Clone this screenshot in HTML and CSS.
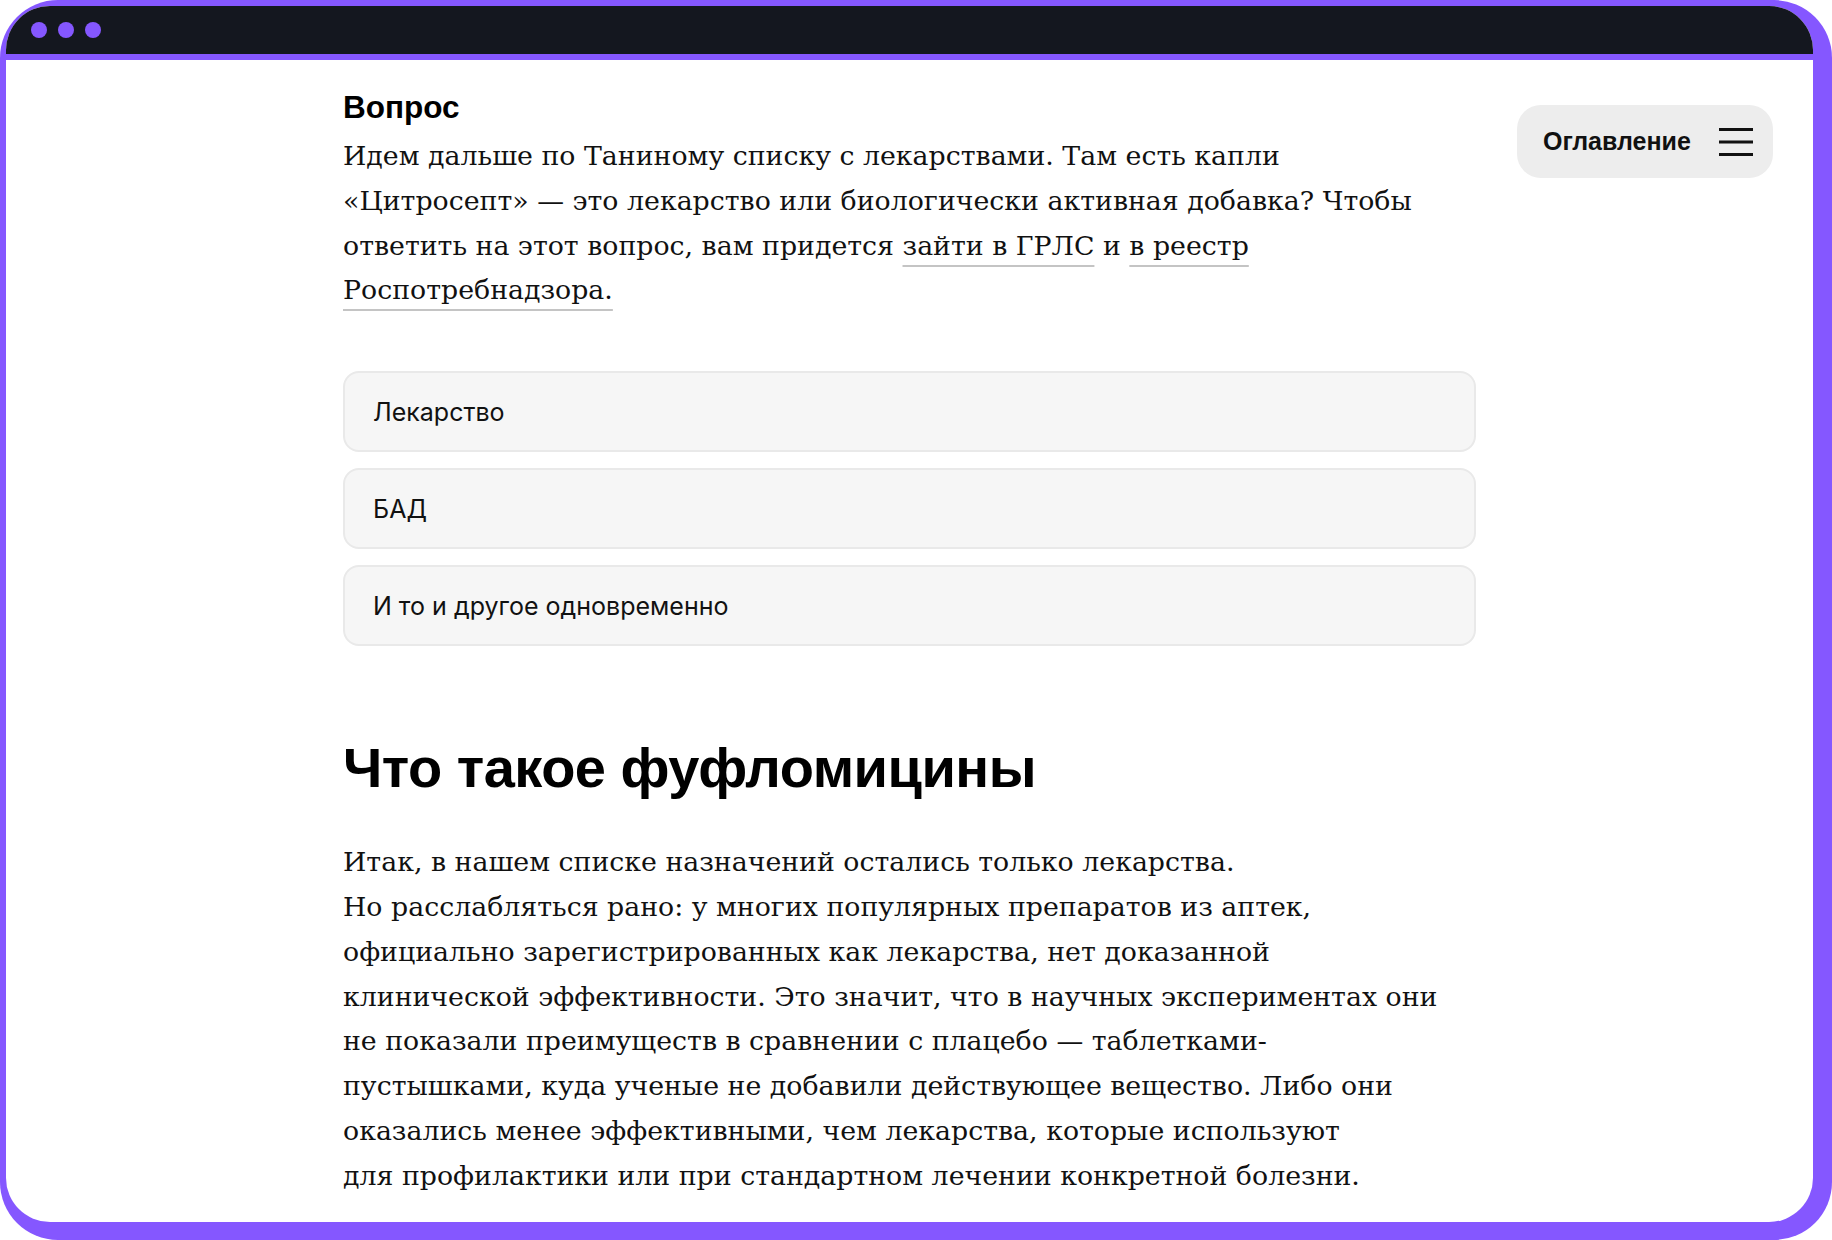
FILE: index.html
```html
<!DOCTYPE html>
<html lang="ru">
<head>
<meta charset="utf-8">
<title>Что такое фуфломицины</title>
<link rel="stylesheet" href="styles.css">
</head>
<body>
<div class="frame">
  <div class="window">
    <div class="titlebar">
      <span class="dot"></span><span class="dot"></span><span class="dot"></span>
    </div>
    <div class="content">
      <article class="article">
        <section class="quiz">
          <h3 class="quiz-title">Вопрос</h3>
          <p class="text">Идем дальше по Таниному списку с лекарствами. Там есть капли<br>«Цитросепт» — это лекарство или биологически активная добавка? Чтобы<br>ответить на этот вопрос, вам придется <a href="#" class="link">зайти в ГРЛС</a> и <a href="#" class="link">в реестр<br>Роспотребнадзора.</a></p>
          <div class="options">
            <button class="option">Лекарство</button>
            <button class="option">БАД</button>
            <button class="option">И то и другое одновременно</button>
          </div>
        </section>
        <h2 class="heading">Что такое фуфломицины</h2>
        <p class="text">Итак, в нашем списке назначений остались только лекарства.<br>Но расслабляться рано: у многих популярных препаратов из аптек,<br>официально зарегистрированных как лекарства, нет доказанной<br>клинической эффективности. Это значит, что в научных экспериментах они<br>не показали преимуществ в сравнении с плацебо — таблетками-<br>пустышками, куда ученые не добавили действующее вещество. Либо они<br>оказались менее эффективными, чем лекарства, которые используют<br>для профилактики или при стандартном лечении конкретной болезни.</p>
      </article>
      <aside class="aside">
        <button class="toc">
          <span class="toc-label">Оглавление</span>
          <svg class="toc-icon" width="36" height="30" viewBox="0 0 36 30" aria-hidden="true">
            <path d="M1 2.5h34M1 15h34M1 27.5h34" stroke="#111" stroke-width="3" fill="none"/>
          </svg>
        </button>
      </aside>
    </div>
  </div>
</div>
</body>
</html>
```

FILE: styles.css
```css
* { box-sizing: border-box; }

html, body {
  margin: 0;
  padding: 0;
  background: #ffffff;
}

.frame {
  width: 1832px;
  height: 1240px;
  background: #8557ff;
  border-radius: 58px;
  padding: 6px 19px 18px 6px;
}

.window {
  height: 100%;
  background: #ffffff;
  border-radius: 44px;
  overflow: hidden;
  display: flex;
  flex-direction: column;
}

.titlebar {
  flex: 0 0 auto;
  height: 54px;
  background: #14171f;
  border-bottom: 6px solid #8557ff;
  display: flex;
  align-items: center;
  gap: 11px;
  padding-left: 25px;
}

.dot {
  width: 16px;
  height: 16px;
  border-radius: 50%;
  background: #8557ff;
}

.content {
  flex: 1 1 auto;
  display: grid;
  grid-template-columns: 337px 1133px 1fr;
}

.article {
  grid-column: 2;
  padding-top: 29px;
}

.aside {
  grid-column: 3;
  display: flex;
  justify-content: flex-end;
  align-items: flex-start;
  padding: 45px 40px 0 0;
}

.quiz-title {
  margin: 0 0 9px;
  font-family: "Liberation Sans", Arial, sans-serif;
  font-weight: 700;
  font-size: 31.5px;
  line-height: 36px;
  color: #000;
}

.text {
  margin: 0;
  font-family: "DejaVu Serif", "Liberation Serif", serif;
  font-size: 26.8px;
  line-height: 44.8px;
  color: #111;
  white-space: nowrap;
}

.link {
  color: inherit;
  text-decoration: underline;
  text-decoration-color: #c4c4c4;
  text-decoration-thickness: 2px;
  text-underline-offset: 10px;
}

.options {
  margin-top: 58px;
  display: flex;
  flex-direction: column;
  gap: 16px;
}

.option {
  display: block;
  width: 100%;
  height: 81px;
  padding: 0 28px;
  text-align: left;
  background: #f6f6f6;
  border: 2px solid #e9e9e9;
  border-radius: 16px;
  font-family: Inter, "Liberation Sans", sans-serif;
  font-size: 25px;
  color: #111;
  cursor: pointer;
}

.heading {
  margin: 90px 0 40px;
  font-family: "Liberation Sans", Arial, sans-serif;
  font-weight: 700;
  font-size: 56px;
  line-height: 64px;
  letter-spacing: -0.5px;
  color: #000;
}

.toc {
  display: flex;
  align-items: center;
  justify-content: space-between;
  width: 256px;
  height: 73px;
  padding: 0 19px 0 26px;
  background: #ededed;
  border: none;
  border-radius: 24px;
  cursor: pointer;
}

.toc-label {
  font-family: "Liberation Sans", Arial, sans-serif;
  font-weight: 700;
  font-size: 25px;
  color: #111;
}

.toc-icon {
  display: block;
}
```
